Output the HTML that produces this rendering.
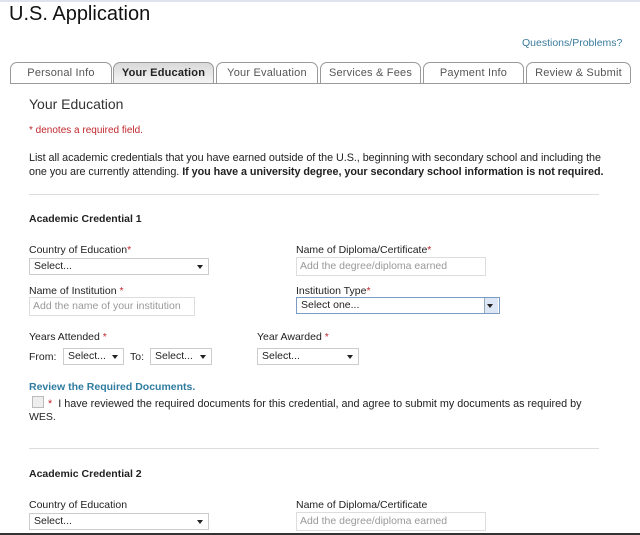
<!DOCTYPE html>
<html><head><style>
body{margin:0;width:640px;height:535px;overflow:hidden;background:#fff;font-family:"Liberation Sans",Arial,sans-serif;color:#222;position:relative}
.a{position:absolute;white-space:nowrap}
.s{font-size:10.5px}
.r{color:#c0282d}
.tab{position:absolute;top:62px;height:20px;border:1px solid #9a9a9a;border-bottom:none;border-radius:7px 7px 0 0;font-size:11px;color:#555;text-align:center;line-height:21px;letter-spacing:.2px;background:#fff}
.sel{position:absolute;height:15px;border:1px solid #ccc;font-size:10.5px;line-height:15px;padding-left:4px;box-sizing:content-box;background:#fff}
.sel:after{content:"";position:absolute;right:5px;top:6px;border:3px solid transparent;border-top:4px solid #222}
.inp{position:absolute;height:17px;border:1px solid #ddd;font-size:10.5px;line-height:17px;padding-left:3px;color:#999}
.hr{position:absolute;left:29px;width:570px;height:1px;background:#ddd}
</style></head><body>
<div class="a" style="left:0;top:0;width:640px;height:2px;background:#dfe3ee"></div>
<div class="a" style="left:9px;top:3px;font-size:20px;color:#111">U.S. Application</div>
<div class="a s" style="left:522px;top:37px;color:#3a7c9c">Questions/Problems?</div>
<div class="tab" style="left:10px;width:100px">Personal Info</div>
<div class="tab" style="left:113px;width:99px;background:linear-gradient(#d9d9d9,#f4f4f4);color:#222;font-weight:bold">Your Education</div>
<div class="tab" style="left:216px;width:100px">Your Evaluation</div>
<div class="tab" style="left:320px;width:99px">Services &amp; Fees</div>
<div class="tab" style="left:423px;width:99px">Payment Info</div>
<div class="tab" style="left:526px;width:103px">Review &amp; Submit</div>
<div class="a" style="left:10px;top:83px;width:620px;height:1px;background:#9a9a9a"></div>
<div class="a" style="left:29px;top:96px;font-size:14px;color:#333">Your Education</div>
<div class="a r" style="left:29px;top:125px;font-size:10px">* denotes a required field.</div>
<div class="a" style="left:29px;top:151px;line-height:14px;font-size:10.8px;letter-spacing:-.05px">List all academic credentials that you have earned outside of the U.S., beginning with secondary school and including the<br>one you are currently attending. <b>If you have a university degree, your secondary school information is not required.</b></div>
<div class="hr" style="top:194px"></div>
<div class="a s" style="left:29px;top:213px;font-weight:bold">Academic Credential 1</div>
<div class="a s" style="left:29px;top:244px">Country of Education<span class="r">*</span></div>
<div class="sel" style="left:29px;top:258px;width:174px">Select...</div>
<div class="a s" style="left:296px;top:244px">Name of Diploma/Certificate<span class="r">*</span></div>
<div class="inp" style="left:296px;top:257px;width:185px">Add the degree/diploma earned</div>
<div class="a s" style="left:29px;top:285px">Name of Institution <span class="r">*</span></div>
<div class="inp" style="left:29px;top:297px;width:161px">Add the name of your institution</div>
<div class="a s" style="left:296px;top:285px">Institution Type<span class="r">*</span></div>
<div class="sel" style="left:296px;top:297px;width:198px;border-color:#7a9cc4;color:#222">Select one...</div>
<div class="a" style="left:484px;top:298px;width:13px;height:15px;background:#dce6f4;border-left:1px solid #9ab"></div>
<div class="a" style="left:487px;top:304px;border:3px solid transparent;border-top:4px solid #222"></div>
<div class="a s" style="left:29px;top:331px">Years Attended <span class="r">*</span></div>
<div class="a s" style="left:29px;top:351px">From:</div>
<div class="sel" style="left:63px;top:348px;width:55px">Select...</div>
<div class="a s" style="left:130px;top:351px">To:</div>
<div class="sel" style="left:150px;top:348px;width:56px">Select...</div>
<div class="a s" style="left:257px;top:331px">Year Awarded <span class="r">*</span></div>
<div class="sel" style="left:257px;top:348px;width:96px">Select...</div>
<div class="a s" style="left:29px;top:381px;color:#2f7ca0;font-weight:bold">Review the Required Documents.</div>
<div class="a" style="left:32px;top:396px;width:10px;height:10px;border:1px solid #bbb;background:#eee"></div>
<div class="a" style="left:48px;top:397px;line-height:14px;font-size:10.8px"><span class="r">*</span>&nbsp; I have reviewed the required documents for this credential, and agree to submit my documents as required by</div>
<div class="a s" style="left:29px;top:411px">WES.</div>
<div class="hr" style="top:448px"></div>
<div class="a s" style="left:29px;top:468px;font-weight:bold">Academic Credential 2</div>
<div class="a s" style="left:29px;top:499px">Country of Education</div>
<div class="sel" style="left:29px;top:513px;width:174px">Select...</div>
<div class="a s" style="left:296px;top:499px">Name of Diploma/Certificate</div>
<div class="inp" style="left:296px;top:512px;width:185px">Add the degree/diploma earned</div>
<div class="a" style="left:0;top:533px;width:640px;height:2px;background:#333"></div>
</body></html>
